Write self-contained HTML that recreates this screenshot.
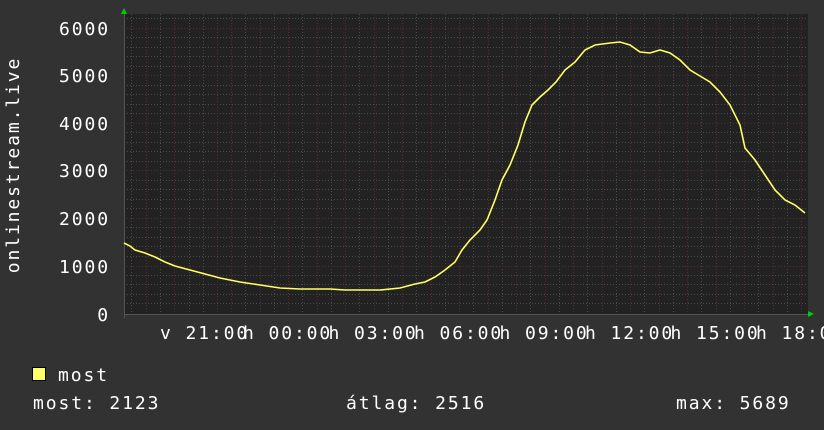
<!DOCTYPE html>
<html><head><meta charset="utf-8"><style>
html,body{margin:0;padding:0;background:#333;}
svg{display:block}
text{font-family:"DejaVu Sans Mono","Liberation Mono",monospace;fill:#fff;font-size:18px;letter-spacing:1.9px}
</style></head><body>
<svg width="824" height="430" viewBox="0 0 824 430" xmlns="http://www.w3.org/2000/svg">
<rect width="824" height="430" fill="#323232"/>
<rect x="124" y="14" width="684" height="300" fill="#222"/>
<g stroke="#4a4a4a" stroke-width="1" stroke-dasharray="1,2" shape-rendering="crispEdges">
<path d="M131.5 14V314M160.5 14V314M189.5 14V314M203.5 14V314M245.5 14V314M274.5 14V314M302.5 14V314M331.5 14V314M359.5 14V314M388.5 14V314M416.5 14V314M445.5 14V314M473.5 14V314M502.5 14V314M530.5 14V314M559.5 14V314M587.5 14V314M616.5 14V314M644.5 14V314M673.5 14V314M701.5 14V314M730.5 14V314M758.5 14V314M787.5 14V314"/>
<path d="M124 37.5H808M124 47.5H808M124 56.5H808M124 66.5H808M124 85.5H808M124 94.5H808M124 104.5H808M124 113.5H808M124 132.5H808M124 142.5H808M124 151.5H808M124 161.5H808M124 180.5H808M124 189.5H808M124 199.5H808M124 208.5H808M124 227.5H808M124 237.5H808M124 246.5H808M124 256.5H808M124 275.5H808M124 284.5H808M124 294.5H808M124 303.5H808M124 18.5H808"/>
</g>
<g stroke="#5c2c2c" stroke-width="1" stroke-dasharray="1,2" shape-rendering="crispEdges">
<path d="M146.5 14V314M174.5 14V314M217.5 14V314M231.5 14V314M260.5 14V314M288.5 14V314M317.5 14V314M345.5 14V314M374.5 14V314M402.5 14V314M431.5 14V314M459.5 14V314M488.5 14V314M516.5 14V314M545.5 14V314M573.5 14V314M602.5 14V314M630.5 14V314M659.5 14V314M687.5 14V314M716.5 14V314M744.5 14V314M773.5 14V314M801.5 14V314"/>
<path d="M124 28.5H808M124 75.5H808M124 123.5H808M124 170.5H808M124 218.5H808M124 266.5H808"/>
</g>
<path d="M124 314.5H808M124.5 14V318" stroke="#555" stroke-width="1"/>
<polygon points="121,14 127,14 124,8" fill="#0c0"/>
<polygon points="808,311 808,317 814,314" fill="#0c0"/>
<polyline fill="none" stroke="#ffff66" stroke-width="1.6" points="124,243 130,246 135,250 145,253 155,257 165,262 175,266 190,270 205,274 220,278 240,282 260,285 280,288 300,289 330,289 345,290 380,290 400,288 415,284 425,282 435,277 445,270 455,262 462,250 470,240 480,230 487,220 495,200 502,180 510,165 518,145 525,122 532,105 540,97 548,90 556,82 565,70 575,62 585,50 595,45 610,43 620,42 630,45 640,52 650,53 660,50 670,53 680,60 690,70 700,76 710,82 720,92 730,105 740,125 745,148 755,160 765,175 775,190 785,200 795,205 805,213"/>
<g text-anchor="end">
<text x="110" y="35">6000</text>
<text x="110" y="82">5000</text>
<text x="110" y="130">4000</text>
<text x="110" y="177">3000</text>
<text x="110" y="225">2000</text>
<text x="110" y="273">1000</text>
<text x="110" y="321">0</text>
</g>
<text transform="translate(19,165) rotate(-90)" text-anchor="middle">onlinestream.live</text>
<text x="160" y="339">v 21:00</text>
<text x="243" y="339">h 00:00</text>
<text x="328.5" y="339">h 03:00</text>
<text x="414" y="339">h 06:00</text>
<text x="499.5" y="339">h 09:00</text>
<text x="585" y="339">h 12:00</text>
<text x="670.5" y="339">h 15:00</text>
<text x="756" y="339">h 18:00</text>
<rect x="32.5" y="367.5" width="13" height="13" fill="#ffff66" stroke="#000"/>
<text x="58" y="381">most</text>
<text x="33" y="409">most: 2123</text>
<text x="346" y="409">átlag: 2516</text>
<text x="676" y="409">max: 5689</text>
</svg>
</body></html>
